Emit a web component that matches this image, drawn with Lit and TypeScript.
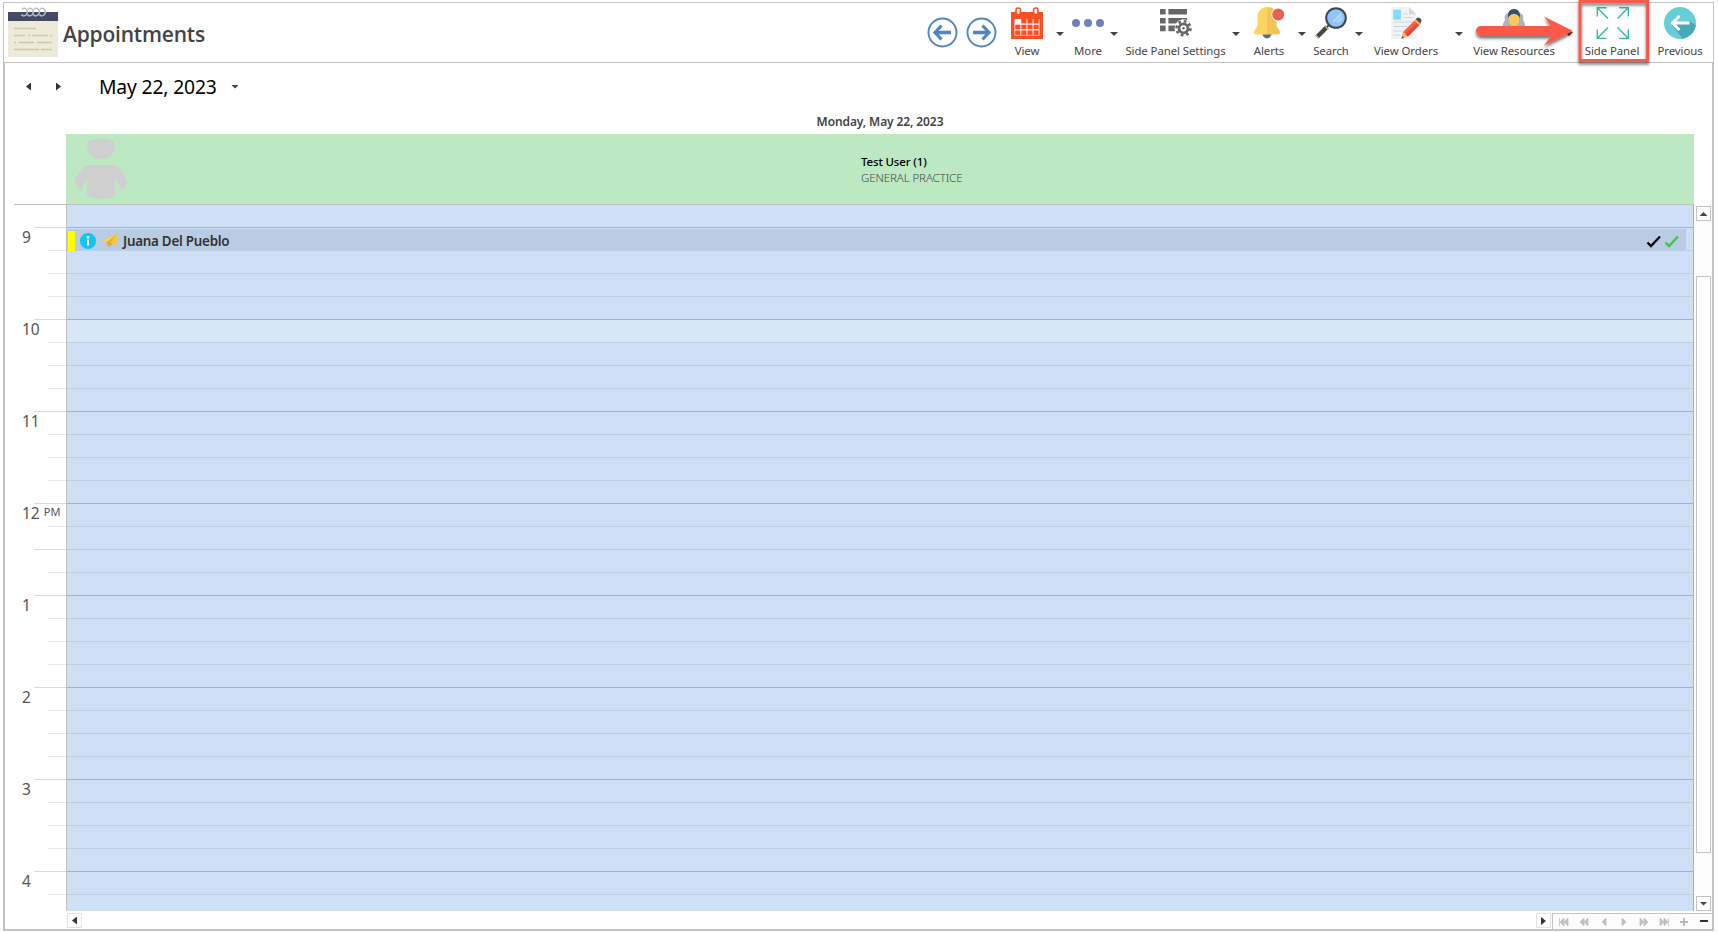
import { LitElement, html, svg, css } from "lit";
import { customElement } from "lit/decorators.js";

const calendarIcon = svg`<svg width="32" height="32" viewBox="0 0 32 32">
  <path fill="#fd4f22" d="M0 5H32V32H0Z"/><path fill="#fff" d="M3.500 12H28.500V28.500H3.500Z"/>
  <g fill="#fff" stroke="#fd4f22" stroke-width="1.600"><rect x="5" y="1" width="4.400" height="6.600" rx="2"/><rect x="22.600" y="1" width="4.400" height="6.600" rx="2"/></g>
  <g fill="#fd4f22">${[0, 1, 2].map((r) => [0, 1, 2, 3].map((c) => (r === 0 && c === 0 ? "" : svg`<rect x=${4.2 + c * 6.1} y=${12 + r * 5.7} width="5.200" height="4.500"/>`)))}</g></svg>`;

const dotsIcon = svg`<svg width="32" height="32" viewBox="0 0 32 32" fill="#7080bd"><circle cx="4" cy="16" r="4"/><circle cx="16" cy="16" r="4"/><circle cx="28" cy="16" r="4"/></svg>`;

const settingsIcon = svg`<svg width="32" height="32" viewBox="0 0 32 32">
  <g fill="#676767"><path d="M0 2h5.600v5.600H0zM8.400 2H27v5.600H8.400zM0 11h5.600v5.600H0zM8.400 11H27v5.600H8.400zM0 18.600h5.600v5.600H0zM8.400 18.600H20v5.600H8.400z"/></g>
  <circle cx="23.500" cy="21.300" r="9" fill="#fff"/>
  <g stroke="#676767" fill="none"><circle cx="23.500" cy="21.300" r="4.500" stroke-width="2.800"/><circle cx="23.500" cy="21.300" r="7" stroke-width="2.600" stroke-dasharray="2.700 2.800"/></g>
  <circle cx="23.500" cy="21.300" r="1.200" fill="#676767"/></svg>`;

const bellIcon = svg`<svg width="32" height="32" viewBox="0 0 32 32">
  <g transform="translate(1 0)"><path fill="#546e85" d="M8.500 26.500h9a4.500 5 0 0 1-9 0z"/>
  <path fill="#fcd462" d="M13.500 0C7 0 3.500 4.500 3.500 10v8c0 3-3.500 4.500-3.500 7.500 0 1.500 1 2 2.500 2H13.500z"/>
  <path fill="#f6c358" d="M13 0c6.500 0 9.600 4.500 9.600 10v8c0 3 3.400 4.500 3.400 7.500 0 1.500-1 2-2.500 2H13z"/>
  <circle cx="24.200" cy="7.600" r="6.800" fill="#fff"/><circle cx="24.200" cy="7.600" r="6" fill="#e56353"/></g></svg>`;

const searchIcon = svg`<svg width="32" height="32" viewBox="0 0 32 32">
  <path d="M11.500 20.500L15 17" stroke="#44474a" stroke-width="2"/>
  <path d="M12 20L2 30" stroke="#44474a" stroke-width="4.400"/><path d="M9.700 18.800l3.600 3.600M.6 28l3.400 3.600" stroke="#a6c86c" stroke-width="1.400"/>
  <circle cx="21" cy="11" r="9.800" fill="#8ec4fb" stroke="#40454b" stroke-width="2"/>
  <path d="M18 15l8-8M22 15.500l5-5" stroke="#b7dcff" stroke-width="1.800"/></svg>`;

const ordersIcon = svg`<svg width="32" height="32" viewBox="0 0 32 32">
  <path fill="#f1f3f6" d="M1 0H19L26.500 7.500V32H1Z"/><path fill="#d0d9e2" d="M19 0L26.500 7.500H19Z"/>
  <path fill="#83dbff" d="M3.200 2.700h7.800v10H3.200z"/>
  <path d="M13.500 7h4M13.500 10.500h10M3.200 15h20M3.200 19.500h14M3.200 24h9M3.200 28h7" stroke="#cfd8e1" stroke-width="1.200"/>
  <path fill="#f7b84e" d="M11.500 31.500l1.500-6.500 5 4.600z"/><path fill="#3d5262" d="M11.500 31.500l.6-2.600 2 1.900z"/>
  <path fill="#fa6148" d="M13 25L25.500 12.500l5 4.600L18 29.600z"/><path fill="#e34b36" d="M15.500 27.300L28 14.800l2.500 2.300L18 29.600z"/>
  <path fill="#f7b84e" d="M24.300 13.700l2-2 5 4.600-2 2z"/><path fill="#3d5262" d="M25.800 12.200l1-1c1.200-1 2.500-.6 3.600.4 1.200 1.100 1.500 2.500.6 3.500l-.7 1.300z"/></svg>`;

const resourcesIcon = svg`<svg width="32" height="32" viewBox="0 0 32 32">
  <path fill="#acb3ba" d="M12 6C7 6 6 9 7 13c-1.500 2-2.500 4-2 9H15zM20 6c5 0 6 3 5 7 1.500 2 2.500 4 2 9H17z"/>
  <path fill="#fcc75b" d="M10.800 8h10.400v5c0 3-1.200 4-2.200 5v4h-6v-4c-1-1-2.200-2-2.200-5z"/>
  <path fill="#365066" d="M10.200 11c-.8-5.500 1-9 5.800-9s6.600 3.500 5.800 9c-.8-2.500-2.600-3.800-5.800-3.800s-5 1.300-5.800 3.800z"/></svg>`;

const expandIcon = svg`<svg width="33" height="32" viewBox="0 0 33 32" fill="none" stroke="#2dbd9b" stroke-width="1.350">
  <path d="M12 11.500L1.300.8M1.300 9.500V.700H10.500M21.500 11.500L32.200.800M23 .700h9.300V9.500M12 20.500L1.300 31.200M1.300 22.500v8.800H10.500M21.500 20.500L32.200 31.200M23 31.300h9.300V22.500"/></svg>`;

const previousIcon = svg`<svg width="32" height="32" viewBox="0 0 32 32">
  <circle cx="16" cy="16" r="16" fill="#68cdd7"/>
  <path fill="#47a9b8" d="M8 18L18.500 31.800A16 16 0 0 0 31.800 18L26 14.500 15 17z"/>
  <path d="M25.500 16H9M15.500 9L8.500 16l7 7" fill="none" stroke="#fff" stroke-width="3"/></svg>`;

const navIcon = (flip: boolean) => svg`<svg width="31" height="31" viewBox="0 0 31 31">
  <g transform=${flip ? "translate(31 0) scale(-1 1)" : ""} fill="none" stroke="#5087c0">
  <circle cx="15.500" cy="15.500" r="14" stroke-width="1.900"/>
  <path d="M24 15.500H8" stroke-width="3.600"/><path d="M14.500 8.500L8 15.500l6.500 7" stroke-width="3.200"/></g></svg>`;

const tools = [
  { label: "View", icon: calendarIcon, width: 46, drop: 20 },
  { label: "More", icon: dotsIcon, width: 36, drop: 16 },
  { label: "Side Panel Settings", icon: settingsIcon, width: 107, drop: 14 },
  { label: "Alerts", icon: bellIcon, width: 52, drop: 14 },
  { label: "Search", icon: searchIcon, width: 44, drop: 12 },
  { label: "View Orders", icon: ordersIcon, width: 82, drop: 24 },
  { label: "View Resources", icon: resourcesIcon, width: 86, drop: 24 },
  { label: "Side Panel", icon: expandIcon, width: 62, drop: 0 },
  { label: "Previous", icon: previousIcon, width: 74, drop: 0 },
];

const hours = ["9", "10", "11", "12", "1", "2", "3", "4"];

const pagerShapes = [
  "M2.500 4v8M7 4L3 8l4 4zM11 4L7 8l4 4z",
  "M7 4L3 8l4 4zM11 4L7 8l4 4z",
  "M9 4L5 8l4 4z",
  "M5 4l4 4-4 4z",
  "M3 4l4 4-4 4zM7 4l4 4-4 4z",
  "M3 4l4 4-4 4zM7 4l4 4-4 4zM11.500 4v8",
];

@customElement("app-root")
export class AppRoot extends LitElement {
  static styles = css`
    :host { display: block; width: 1718px; height: 933px; box-sizing: border-box; padding: 2px 4px 0 3px; background: #fff; overflow: hidden; position: relative; font-family: "Noto Sans", "Open Sans", sans-serif; color: #444; }
    * { box-sizing: border-box; }
    svg { display: block; flex: none; }
    .header { height: 61px; border: 1px solid #c3c3c3; display: flex; padding-left: 4px; }
    .logo { margin-top: 4px; }
    h1 { margin: 9px 0 0 5px; width: 800px; font: 600 21px/44px "Open Sans", "Noto Sans", sans-serif; letter-spacing: -.2px; }
    .toolbar { display: flex; margin: 0 -4px 0 auto; }
    .nav { display: flex; gap: 8px; padding: 14px 7px 0 0; }
    .tool { display: flex; flex-direction: column; align-items: center; padding-top: 4px; }
    .label { font-size: 11.400px; line-height: 16px; margin-top: 4px; white-space: nowrap; letter-spacing: -.07px; }
    .drop { display: flex; justify-content: center; padding-top: 29px; }
    .caret { width: 8px; height: 4px; background: #444; clip-path: polygon(0 0, 100% 0, 50% 100%); }
    .body { height: 868px; border: solid #c3c3c3; border-width: 0 2px 2px; width: 1711px; display: flex; flex-direction: column; }
    .datebar { height: 50px; display: flex; align-items: center; padding: 0 0 3px 21px; color: #000; }
    .tri { width: 5px; height: 8px; background: #333; clip-path: polygon(0 50%, 100% 0, 100% 100%); }
    .tri.next { transform: scaleX(-1); margin-left: 25px; }
    .date { margin: 0 13px 0 38px; font-size: 19.300px; width: 119px; white-space: nowrap; letter-spacing: -.15px; }
    .day { height: 21px; width: 1628px; margin-left: 61px; text-align: center; font: 600 12px/17px "Noto Sans", sans-serif; letter-spacing: -.1px; }
    .resource { height: 70px; margin-left: 61px; width: 1628px; background: #bce9c1; display: flex; padding-left: 8px; }
    .person { margin-top: 4px; }
    .who { margin: 20px 0 0 733px; line-height: 16px; color: #000; white-space: nowrap; }
    .name { font-weight: 500; font-size: 11.500px; letter-spacing: -.15px; }
    .spec { font-weight: 300; font-size: 11.500px; letter-spacing: -.1px; color: #444; }
    .main { height: 707px; display: flex; }
    .times { width: 62px; border-right: 1px solid #c0c0c0; overflow: hidden; }
    .rule { height: 1px; background: #c0c0c0; margin-left: 9px; }
    .first { height: 22px; }
    .hour { height: 92px; display: flex; justify-content: space-between; }
    .hl { font-size: 15.500px; line-height: 20px; padding-left: 17px; white-space: nowrap; width: 0; display: flex; align-items: start; gap: 4px; color: #555; }
    .pm { font-size: 11px; line-height: 18px; }
    .ticks { width: 32px; }
    .tick { height: 23px; border-top: 1px solid #e8e8e8; margin-left: 14px; }
    .tick.wide { margin-left: 0; border-color: #dadada; }
    .slots { width: 1627px; flex: none; border-top: 1px solid #c0c0c0; border-right: 1px solid #9fb2c7; background: #cde0f5; overflow: hidden; }
    .slot { height: 23px; border-top: 1px solid #bbcfe2; }
    .slot.start { height: 22px; border: 0; }
    .slot.whole { border-color: #9eb2c9; }
    .slot.now { background: #d7e7f6; }
    .appt { margin-top: 1px; width: 1619px; height: 22px; background: #b8cce4; display: flex; align-items: center; padding: 1px 0 0 1px; font: 600 13.400px/20px "Noto Sans", sans-serif; color: #333; letter-spacing: -.25px; }
    .status { width: 7px; height: 20px; background: #ff0; margin-right: 5px; }
    .plane { margin: 0 5px 0 6px; }
    .who2 { flex: 1; white-space: nowrap; }
    .scroll { width: 18px; padding: 2px 1px 0 2px; display: flex; flex-direction: column; background: #fdfdfd; }
    .btn { width: 15px; height: 15px; border: 1px solid #c3c3c3; background: #fff; display: grid; place-items: center; flex: none; }
    .soft { border-color: #e2e2e2; }
    .up { transform: scaleY(-1); }
    .thumb { height: 577px; margin: 55px 0 43px; border: 1px solid #c3c3c3; background: #fff; }
    .foot { height: 18px; padding-left: 62px; display: flex; align-items: start; }
    .foot .btn { margin-top: 2px; }
    .foot .right { margin-left: 1454px; }
    .pager { height: 16px; margin-top: 2px; margin-left: 1px; width: 161px; border: solid #c3c3c3; border-width: 1px 0 0 1px; display: flex; background: #fcfcfc; padding-left: 4px; gap: 6px; }
    .callout { position: absolute; left: 1470px; top: 0; }
  `;

  render() {
    return html`
      <div class="header">
        <svg class="logo" width="50" height="50" viewBox="0 0 50 50">
          <path fill="#edeada" d="M0 14H50V50H0z"/><path fill="#434a62" d="M0 5H50V14H0z"/>
          <g fill="none" stroke="#b7c0c8" stroke-width="1.500">${[17, 23, 29, 35].map((x) => svg`<path d="M${x - 3} 2.500q2.500-2.500 4.500 0t-.5 5.500q-3 2-4.500-.5"/>`)}</g>
          <path d="M6 21.500H28M6 28.500H17M20 28.500h2M24 28.500H40M42 28.500h2M6 35.500h2M11 35.500H26M29 35.500H44M6 42.500H31M33 42.500H44" stroke="#cec9a4" stroke-width="1.700"/></svg>
        <h1>Appointments</h1>
        <div class="toolbar">
          <div class="nav">${navIcon(false)}${navIcon(true)}</div>
          ${tools.map((t) => html`<div class="tool" style="width:${t.width}px">${t.icon}<span class="label">${t.label}</span></div>
            ${t.drop ? html`<div class="drop" style="width:${t.drop}px"><i class="caret"></i></div>` : ""}`)}
        </div>
      </div>
      <div class="body">
        <div class="datebar"><i class="tri"></i><i class="tri next"></i><span class="date">May 22, 2023</span><i class="caret"></i></div>
        <div class="day">Monday, May 22, 2023</div>
        <div class="resource">
          <svg class="person" width="54" height="62" viewBox="0 0 54 62" fill="#cfcfcf">
            <path d="M13 6Q13 3 17 2Q27-.8 37 2Q41 3 41 6Q40.500 21 27 21.500Q13.500 21 13 6z"/>
            <path d="M18 27H37Q45 27 49 35L53.500 44 48 53Q45.500 45 41 41V58Q35 60.500 27 61 18 60.500 13 57.500V41Q9 46 6.500 52.500L.5 44Q6 27 18 27z"/></svg>
          <div class="who"><div class="name">Test User (1)</div><div class="spec">GENERAL PRACTICE</div></div>
        </div>
        <div class="main">
          <div class="times">
            <div class="rule"></div><div class="first"></div>
            ${hours.map((h) => html`<div class="hour"><div class="hl">${h}${h === "12" ? html`<span class="pm">PM</span>` : ""}</div>
              <div class="ticks">${[0, 1, 2, 3].map((q) => html`<div class="tick ${q === 0 || (q === 2 && h === "12") ? "wide" : ""}"></div>`)}</div></div>`)}
          </div>
          <div class="slots">
            <div class="slot start"></div>
            ${hours.map((h) => [0, 1, 2, 3].map((q) => html`<div class="slot ${q === 0 ? "whole" : ""} ${h === "10" && q === 0 ? "now" : ""}">${h === "9" && q === 0 ? this.appointment() : ""}</div>`))}
          </div>
          <div class="scroll">
            <div class="btn"><i class="caret up"></i></div><div class="thumb"></div><div class="btn"><i class="caret"></i></div>
          </div>
        </div>
        <div class="foot">
          <div class="btn soft"><i class="tri"></i></div>
          <div class="btn soft right"><svg width="5" height="8"><path d="M0 0L5 4 0 8z" fill="#333"/></svg></div>
          <div class="pager">
            ${pagerShapes.map((d) => html`<svg width="14" height="16" viewBox="0 0 14 16"><path d=${d} fill="#c0c0c0" stroke="#c0c0c0" stroke-width=".8"/></svg>`)}
            <svg width="14" height="16" viewBox="0 0 14 16"><path d="M3 8h8M7 4v8" stroke="#bbb" stroke-width="2"/></svg>
            <svg width="14" height="16" viewBox="0 0 14 16"><path d="M3 7h8" stroke="#333" stroke-width="2"/></svg>
          </div>
        </div>
      </div>
      <svg class="callout" width="190" height="70" viewBox="1470 0 190 70">
        <defs><filter id="s" x="-10%" y="-20%" width="120%" height="160%"><feDropShadow dx="0" dy="2.500" stdDeviation="1.500" flood-color="#000" flood-opacity=".55"/></filter></defs>
        <path filter="url(#s)" fill="#fe594a" d="M1481 26H1551L1544 16.500 1573 31 1544 45.500 1551 36H1481a5 5 0 0 1 0-10z"/>
        <rect filter="url(#s)" x="1580" y="1.500" width="67.500" height="59" fill="none" stroke="#f45b50" stroke-width="3"/>
      </svg>`;
  }

  private appointment() {
    return html`<div class="appt">
      <i class="status"></i>
      <svg width="16" height="16" viewBox="0 0 16 16"><circle cx="8" cy="8" r="8" fill="#12c4fb"/><circle cx="8" cy="4.200" r="1.200" fill="#fff"/><path d="M8 6.500v6" stroke="#fff" stroke-width="2"/></svg>
      <svg class="plane" width="16" height="15" viewBox="0 0 16 15"><path fill="#fbd350" d="M16 0L0 8 4.500 9.500z"/><path fill="#e9ae28" d="M16 0L4.500 9.500 6 14z"/><path fill="#f8c83c" d="M16 0L8 10 14 12.500z"/><path fill="#e0a020" d="M8 10L6 14 10.500 11z"/></svg>
      <span class="who2">Juana Del Pueblo</span>
      <svg width="40" height="14" viewBox="0 0 40 14" fill="none" stroke-width="2.300"><path d="M1.500 8.500l3.500 3.500L14 2.500" stroke="#000"/><path d="M19.500 8.500l3.500 3.500L32 2.500" stroke="#33cc33"/></svg>
    </div>`;
  }
}
